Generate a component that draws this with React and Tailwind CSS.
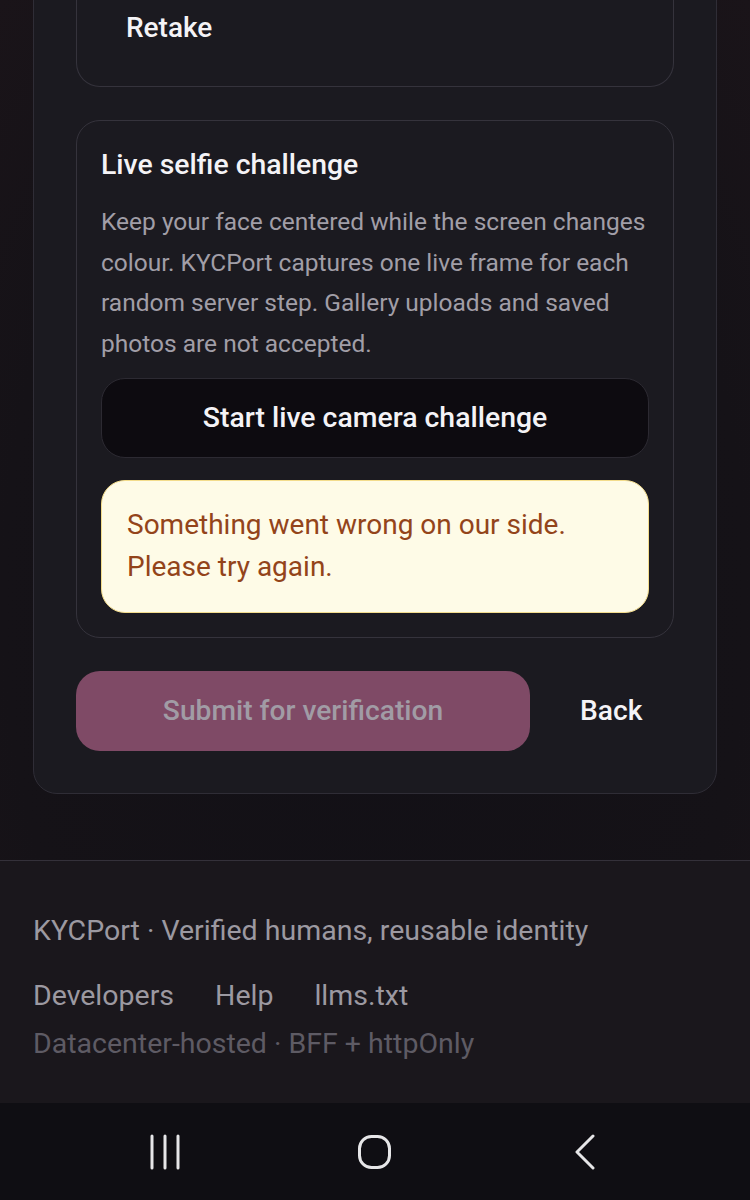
export default function App() {
  const font = { fontFamily: "Roboto, 'Noto Sans', sans-serif" };
  return (
    <div
      style={font}
      className="w-[750px] h-[1200px] overflow-hidden flex flex-col bg-[radial-gradient(ellipse_at_center,#121016_0%,#151217_70%,#1a1419_100%)]"
    >
      <main className="px-[33px] pb-[66px]">
        <section className="-mt-[60px] rounded-[24px] border border-[#2f2d36] bg-[#1b1a20] px-[42px] pb-[42px] flex flex-col gap-[33px]">
          <div className="rounded-b-[24px] border border-t-0 border-[#35333c] pt-[69px] pb-[40px] pl-[49px]">
            <button className="text-[28px] leading-[36px] font-medium text-[#f4f3f6]">Retake</button>
          </div>

          <div className="rounded-[24px] border border-[#35333c] px-[24px] pt-[26px] pb-[24px] flex flex-col">
            <h2 className="text-[28.4px] leading-[36px] font-medium text-[#f4f3f6]">Live selfie challenge</h2>
            <p className="mt-[19px] text-[24.5px] leading-[40.5px] text-[#a19ea7]">
              Keep your face centered while the screen changes colour. KYCPort captures one live frame for each random server step. Gallery uploads and saved photos are not accepted.
            </p>
            <button className="mt-[14px] h-[80px] rounded-[24px] border border-[#2c2a32] bg-[#0d0b10] text-[28.4px] font-medium text-[#f4f3f6]">
              Start live camera challenge
            </button>
            <div className="mt-[22px] rounded-[24px] border border-[#f3dc8c] bg-[#fefbe7] pl-[25px] pr-[20px] pt-[23px] pb-[24px] text-[28px] leading-[42px] text-[#93441a]">
              Something went wrong on our side. Please try again.
            </div>
          </div>

          <div className="flex items-center">
            <button className="w-[454px] h-[80px] rounded-[24px] bg-[#7f4a66] text-[28.2px] font-medium text-[#a19ca5]">
              Submit for verification
            </button>
            <button className="ml-[50px] text-[28.2px] font-medium text-[#f4f3f6]">Back</button>
          </div>
        </section>
      </main>

      <footer className="flex-1 border-t border-[#34313a] bg-[#1a171c] px-[33px] pt-[52px]">
        <p className="text-[28.5px] leading-[36px] text-[#9c99a1]">KYCPort · Verified humans, reusable identity</p>
        <nav className="mt-[29px] flex gap-[41px] text-[28.5px] leading-[36px] text-[#9c99a1]">
          <a>Developers</a>
          <a>Help</a>
          <a>llms.txt</a>
        </nav>
        <p className="mt-[12px] text-[28.5px] leading-[36px] text-[#5e5b64]">Datacenter-hosted · BFF + httpOnly</p>
      </footer>

      <div className="h-[97px] bg-[#0f0e13] flex items-center justify-around px-[60px]">
        <div className="w-[210px] flex justify-center">
          <svg width="30" height="36" viewBox="0 0 30 36" className="text-[#e6e6e8]">
            <path d="M2 2v32M15 2v32M28 2v32" stroke="currentColor" strokeWidth="3" strokeLinecap="round" />
          </svg>
        </div>
        <div className="w-[210px] flex justify-center">
          <svg width="36" height="36" viewBox="0 0 36 36" className="text-[#e6e6e8]">
            <rect x="2.5" y="2.5" width="30" height="31" rx="12" fill="none" stroke="currentColor" strokeWidth="3" />
          </svg>
        </div>
        <div className="w-[210px] flex justify-center">
          <svg width="24" height="36" viewBox="0 0 24 36" className="text-[#e6e6e8]">
            <path d="M20 2L4 18l16 16" fill="none" stroke="currentColor" strokeWidth="3" strokeLinecap="round" strokeLinejoin="round" />
          </svg>
        </div>
      </div>
    </div>
  );
}
